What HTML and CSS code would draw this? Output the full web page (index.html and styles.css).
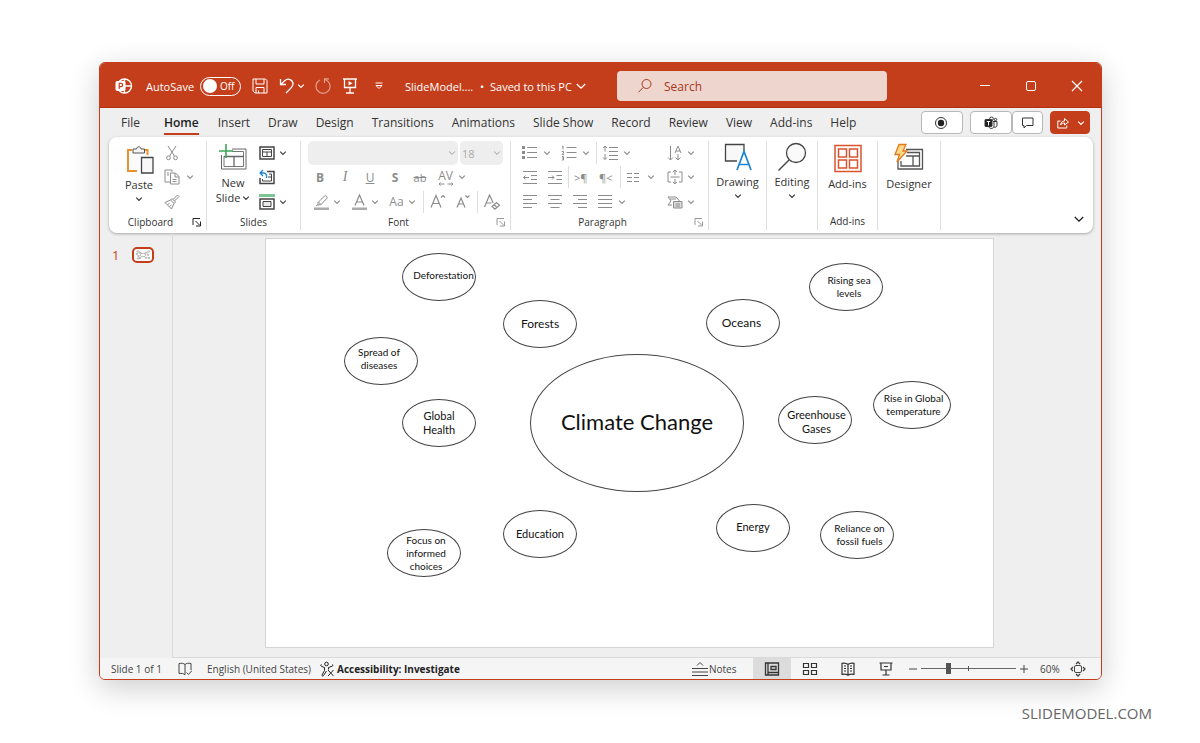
FILE: index.html
```html
<!DOCTYPE html>
<html lang="en">
<head>
<meta charset="utf-8">
<title>SlideModel - Climate Change</title>
<link rel="stylesheet" href="styles.css">
</head>
<body>
<svg class="defs" aria-hidden="true">
  <symbol id="chev" viewBox="0 0 8 8"><path d="M1.2 2.6 4 5.4 6.800 2.600"/></symbol>
  <symbol id="launch" viewBox="0 0 10 10"><path d="M1 8V1.500H8M3.500 4 8 8.500M8.500 4.500V9H4"/></symbol>
</svg>

<main class="window">
  <header class="titlebar">
    <svg class="logo" viewBox="0 0 18 18" aria-hidden="true">
      <circle cx="9.500" cy="9" r="7" fill="none" stroke="#fff" stroke-width="1.400"/>
      <path d="M9.500 2v14M9.500 9h7" stroke="#fff" stroke-width="1.300"/>
      <rect x="1" y="4.500" width="9" height="9" rx="1" fill="#fff"/>
      <path d="M4.200 12V6.300h1.800a1.600 1.600 0 0 1 0 3.300H4.200" fill="none" stroke="#c43e1c" stroke-width="1.200"/>
    </svg>
    <label class="autosave"><span class="autosave-text">AutoSave</span>
      <span class="toggle"><input type="checkbox" role="switch" class="toggle-input"><span class="toggle-state">Off</span></span>
    </label>
    <div class="quick">
      <button class="tbtn save" aria-label="Save"><svg class="i16" viewBox="0 0 16 16"><path d="M1 1h12.500l1.500 1.500V15H3L1 13zM4 1v5h8V1M4 15v-5.500h8V15M6.500 15v-2.500"/></svg></button>
      <button class="tbtn undo" aria-label="Undo"><svg class="i16" viewBox="0 0 16 16"><path d="M1.500 1v5.500H7M1.500 6.500 6 2.500C9-.2 14 1.500 14 6c0 2-1.200 3.200-2.500 4.500L7 15" stroke-width="1.300"/></svg><svg class="chev"><use href="#chev"/></svg></button>
      <button class="tbtn redo" aria-label="Redo"><svg class="i16" viewBox="0 0 16 16"><path d="M9.500 5V.8H14M5 2A7 7 0 1 0 11.500 2.200L9.500.8" stroke-width="1.200"/></svg></button>
      <button class="tbtn show" aria-label="Start slide show"><svg class="i16" viewBox="0 0 16 16"><path d="M1 1h14M2.500 1v8.500h11V1M8 9.500V15M4 15h8" stroke-width="1.300"/><path d="m6.500 3 4 2.300-4 2.300z" fill="#fff" stroke="none"/></svg></button>
      <button class="tbtn more" aria-label="Customize toolbar"><svg class="i10" viewBox="0 0 10 10"><path d="M1.500 2h7M2 4.500h6L5 7.500z"/></svg></button>
    </div>
    <button class="docname"><span class="doc-file">SlideModel....</span><span class="doc-dot">•</span><span>Saved to this PC</span><svg class="i10 doc-chev" viewBox="0 0 10 10"><path d="M.8 3 5 7.200 9.200 3" stroke-width="1.300"/></svg></button>
    <label class="search">
      <svg class="i16" viewBox="0 0 16 16"><circle cx="9.500" cy="6" r="4.500"/><path d="M6.300 9.300 1.500 14.300"/></svg>
      <input type="text" placeholder="Search" aria-label="Search">
    </label>
    <div class="controls">
      <button aria-label="Minimize"><svg class="i12" viewBox="0 0 12 12"><path d="M1 5.500h10"/></svg></button>
      <button aria-label="Maximize"><svg class="i12" viewBox="0 0 12 12"><rect x="1.500" y="1.500" width="9" height="9" rx="1.500"/></svg></button>
      <button aria-label="Close"><svg class="i12" viewBox="0 0 12 12"><path d="m1 1 10 10M11 1 1 11" stroke-width="1.200"/></svg></button>
    </div>
  </header>

  <div class="tabrow">
    <nav class="tabs">
      <a href="#file" class="tab tab-file">File</a><a href="#home" class="tab active" aria-current="page">Home</a><a href="#insert" class="tab">Insert</a><a href="#draw" class="tab">Draw</a><a href="#design" class="tab">Design</a><a href="#transitions" class="tab">Transitions</a><a href="#animations" class="tab">Animations</a><a href="#slideshow" class="tab">Slide Show</a><a href="#record" class="tab">Record</a><a href="#review" class="tab">Review</a><a href="#view" class="tab">View</a><a href="#addins" class="tab">Add-ins</a><a href="#help" class="tab">Help</a>
    </nav>
    <div class="actions">
      <button class="act rec" aria-label="Record"><svg class="i14" viewBox="0 0 14 14"><circle cx="6" cy="7" r="5.500"/><circle cx="6" cy="7" r="3.200" fill="#222" stroke="none"/></svg></button>
      <button class="act teams" aria-label="Teams"><svg class="i14" viewBox="0 0 14 14"><circle cx="7.500" cy="2.800" r="1.800"/><circle cx="11.500" cy="3.500" r="1.200"/><path d="M9 5.500h4v4a2 2 0 0 1-3 1.500M5 11c.5 2 5 2.300 5-1.500v-4"/><rect x="1" y="3.500" width="7" height="7" rx=".6" fill="#222"/><path d="M2.800 5.500h3.400M4.500 5.500v4" stroke="#fff"/></svg></button>
      <button class="act comments" aria-label="Comments"><svg class="i14" viewBox="0 0 14 14"><path d="M1.500 2h10.500v7.500H5.500L3 12V9.500H1.500z"/></svg></button>
      <button class="act share" aria-label="Share"><svg class="i14" viewBox="0 0 14 14"><path d="M4.500 5H1.800v7h9V9.500M4.500 9C5 6 6.500 5 8.500 5V2.500L12.500 6 8.500 9V7C6.500 7 5.500 7.500 4.500 9z"/></svg><svg class="chev"><use href="#chev"/></svg></button>
    </div>
  </div>

  <section class="ribbon" aria-label="Home ribbon">
    <div class="group clipboard">
      <div class="group-body">
        <button class="big paste"><svg class="i30" viewBox="0 0 30 30"><path d="M8 5H4v21h9M20 5h3.500v5" stroke="#e8912d" stroke-width="2"/><path d="M5.500 7v17H15V12h7V7z" fill="#fafafa" stroke="none"/><path d="M9 8V4h3.500C13 1 16.500 1 17 4h3.500v4z" fill="#f6f6f6" stroke="#555"/><path d="M17.500 12.500h11.500v15.500H17.500z" fill="#f8f8f8" stroke="#444" stroke-width="1.300"/></svg><span>Paste</span><svg class="chev"><use href="#chev"/></svg></button>
        <div class="stack">
          <button class="sb off" aria-label="Cut"><svg class="i16" viewBox="0 0 16 16"><path d="M4 1 10.500 11M12 1 5.500 11"/><circle cx="4.500" cy="12.800" r="1.900"/><circle cx="11.500" cy="12.800" r="1.900"/></svg></button>
          <button class="sb off" aria-label="Copy"><svg class="i16" viewBox="0 0 16 16"><path d="M6 13H1V1h7v2M6.500 4h5l3.500 3.500V15H6.500zM11 4v4h4M8.500 10.500h4M8.500 12.500h4M3 4h2M3 6h2"/></svg><svg class="chev"><use href="#chev"/></svg></button>
          <button class="sb off" aria-label="Format painter"><svg class="i16" viewBox="0 0 16 16"><path d="M9 5.500 13.500 1 15 2.500 10.500 7M8 4.500l3.500 3.500-1.500 1.500L6.500 6zM6.500 6 1 8.500 7.500 15 10 9.500M3.500 10.500l2-1M5.500 12.500l2-1.500"/></svg></button>
        </div>
      </div>
      <div class="group-name with-launch"><span>Clipboard</span><button class="launch dark" aria-label="Clipboard options"><svg><use href="#launch"/></svg></button></div>
    </div>

    <div class="group slides">
      <div class="group-body">
        <button class="big newslide"><svg class="i30" viewBox="0 0 30 30"><path d="M3.500 12v14h24.500v-20H14" stroke="#666" stroke-width="1"/><path d="M6 13v10.500h19.500v-15H14" stroke="#777" stroke-width="1"/><path d="M6 13.500h19.500M16 13.500V24" stroke="#666" stroke-width="1.300"/><path d="M8 1v14M1 8h14" stroke="#39a95a" stroke-width="1.600"/></svg><span>New<br>Slide <svg class="chev"><use href="#chev"/></svg></span></button>
        <div class="stack">
          <button class="sb" aria-label="Layout"><svg class="i16" viewBox="0 0 16 16"><path d="M1 2h14v12H1z" stroke-width="1.500"/><path d="M3.500 4.500h9v7h-9zM3.500 7h9M8 7v4.500"/></svg><svg class="chev"><use href="#chev"/></svg></button>
          <button class="sb" aria-label="Reset slide"><svg class="i16" viewBox="0 0 16 16"><path d="M8 2.500h7v12H1V9" stroke-width="1.500"/><path d="M10 5h2.500v7h-9v-2M9 8h3"/><path d="M4 1 1 4l3 3M1 4h3.500C7 4 8 6 7.500 9" stroke="#1a84d6" stroke-width="1.300"/></svg></button>
          <button class="sb" aria-label="Section"><svg class="i16" viewBox="0 0 16 16"><path d="M0 0h16v3H0z" fill="#7cc595" stroke="none"/><path d="M1 5h14v10H1z" stroke-width="1.500"/><path d="M4 7.500h8v5H4z" fill="#e8e8e8"/></svg><svg class="chev"><use href="#chev"/></svg></button>
        </div>
      </div>
      <div class="group-name"><span>Slides</span></div>
    </div>

    <div class="group font">
      <div class="rows off">
        <div class="row">
          <select class="pick family" aria-label="Font family"><option></option></select>
          <select class="pick size" aria-label="Font size"><option>18</option></select>
        </div>
        <div class="row">
          <button class="fb"><b>B</b></button>
          <button class="fb serif"><i>I</i></button>
          <button class="fb"><u>U</u></button>
          <button class="fb"><b>S</b></button>
          <button class="fb small"><s>ab</s></button>
          <button class="fb wide" aria-label="Character spacing"><span class="spacing">AV<svg viewBox="0 0 16 4"><path d="M1 2h5.500M9.500 2H15M2.500.5 1 2l1.500 1.500M13.500.5 15 2l-1.500 1.500"/></svg></span><svg class="chev"><use href="#chev"/></svg></button>
        </div>
        <div class="row">
          <button class="fb wide" aria-label="Highlight color"><svg class="i16" viewBox="0 0 16 16"><path d="M1 13.500h15V16H1z" fill="#aaa" stroke="none"/><path d="M5 8.500 11.500 2c1-1 3.500 1 2.500 2.300L8 10.500 5 11zM5.500 8 8 10.500M5 10.500 3 12"/></svg><svg class="chev"><use href="#chev"/></svg></button>
          <button class="fb wide" aria-label="Font color"><svg class="i16" viewBox="0 0 16 16"><path d="M1 13.500h15V16H1z" fill="#aaa" stroke="none"/><path d="M4 11.500 8.500 1 13 11.500M5.500 8h6" stroke-width="1.200"/></svg><svg class="chev"><use href="#chev"/></svg></button>
          <button class="fb wide" aria-label="Change case"><span>Aa</span><svg class="chev"><use href="#chev"/></svg></button>
          <span class="bar"></span>
          <button class="fb" aria-label="Increase font size"><svg class="i18" viewBox="0 0 18 18"><path d="M2 14.500 7 2.500l5 12M3.800 10.500h6.500M12 4.500l2-2 2 2" stroke-width="1.200"/></svg></button>
          <button class="fb" aria-label="Decrease font size"><svg class="i18" viewBox="0 0 18 18"><path d="m3 14.500 4-9.500 4 9.500M4.500 11h5M11.500 2.500l2 2 2-2" stroke-width="1.200"/></svg></button>
          <span class="bar"></span>
          <button class="fb" aria-label="Clear formatting"><svg class="i18" viewBox="0 0 18 18"><path d="M1.500 14 6.500 2l3.700 8M3.500 10h5M9 13.500l4.500-4 3 2.800-4.500 4zM11 11.800l3 2.700" stroke-width="1.200"/></svg></button>
        </div>
      </div>
      <div class="group-name with-launch"><span>Font</span><button class="launch" aria-label="Font options"><svg><use href="#launch"/></svg></button></div>
    </div>

    <div class="group paragraph">
      <div class="rows off">
        <div class="row">
          <button class="pb wide" aria-label="Bullets"><svg class="i16" viewBox="0 0 16 16"><path d="M5 2.500h10M5 7.500h10M5 12.500h10"/><path d="M0 2.500h3M0 7.500h3M0 12.500h3" stroke-width="3"/></svg><svg class="chev"><use href="#chev"/></svg></button>
          <button class="pb wide" aria-label="Numbering"><svg class="i16" viewBox="0 0 16 16"><path d="M5.500 2.500h10M5.500 7.500h10M5.500 12.500h10M1 1.500l1-.5v3.500M.8 6.500h1.700v1.500L1 9.500h2M.8 11.500h1.700v3.500H.8M1 13h1.500" /></svg><svg class="chev"><use href="#chev"/></svg></button>
          <span class="bar"></span>
          <button class="pb wide" aria-label="Line spacing"><svg class="i16" viewBox="0 0 16 16"><path d="M7 2.500h9M7 6.500h9M7 10.500h9M7 14.500h9M3 1v5.500M3 9v5.500M1 3l2-2 2 2M1 12.500l2 2 2-2"/></svg><svg class="chev"><use href="#chev"/></svg></button>
          <button class="pb last" aria-label="Text direction"><svg class="i16" viewBox="0 0 16 16"><path d="M3.500 1v14M1 12.500 3.500 15 6 12.500M11 9v6M8.500 12.500 11 15l2.500-2.500M8 8l3-7 3 7M9 6h4"/></svg><svg class="chev"><use href="#chev"/></svg></button>
        </div>
        <div class="row">
          <button class="pb" aria-label="Decrease indent"><svg class="i16" viewBox="0 0 16 16"><path d="M1 2.500h14M9 6.500h6M9 10.500h6M1 14.500h14M1.500 8.500H7M3.500 6.500l-2 2 2 2"/></svg></button>
          <button class="pb" aria-label="Increase indent"><svg class="i16" viewBox="0 0 16 16"><path d="M1 2.500h14M9.500 6.500H15M9.500 10.500H15M1 14.500h14M1 8.500h6M5 6.500l2 2-2 2"/></svg></button>
          <span class="bar"></span>
          <button class="pb pil" aria-label="Left to right">&gt;¶</button>
          <button class="pb pil" aria-label="Right to left">¶&lt;</button>
          <span class="bar"></span>
          <button class="pb wide" aria-label="Columns"><svg class="i16" viewBox="0 0 16 16"><path d="M1 4.500h5M1 8.500h5M1 12.500h5M8 4.500h5M8 8.500h5M8 12.500h5"/></svg><svg class="chev"><use href="#chev"/></svg></button>
          <button class="pb last" aria-label="Align text"><svg class="i16" viewBox="0 0 16 16"><path d="M4 3H1v10h3M12 3h3v10h-3M3.500 8h9M8 1v5M8 10v5M6 3l2-2 2 2M6 13l2 2 2-2"/></svg><svg class="chev"><use href="#chev"/></svg></button>
        </div>
        <div class="row">
          <button class="pb" aria-label="Align left"><svg class="i16" viewBox="0 0 16 16"><path d="M1 1.500h14M1 5.500h9M1 9.500h14M1 13.500h9"/></svg></button>
          <button class="pb" aria-label="Center"><svg class="i16" viewBox="0 0 16 16"><path d="M1 1.500h14M3.500 5.500h9M1 9.500h14M3.500 13.500h9"/></svg></button>
          <button class="pb" aria-label="Align right"><svg class="i16" viewBox="0 0 16 16"><path d="M1 1.500h14M6 5.500h9M1 9.500h14M6 13.500h9"/></svg></button>
          <button class="pb wide" aria-label="Justify"><svg class="i16" viewBox="0 0 16 16"><path d="M1 1.500h14M1 5.500h14M1 9.500h14M1 13.500h14"/></svg><svg class="chev"><use href="#chev"/></svg></button>
          <button class="pb last" aria-label="Convert to SmartArt"><svg class="i16" viewBox="0 0 16 16"><path d="M1 3h8l3.500 4M1 3l3 4-3 4h4M3 5h6"/><path d="M6.500 7.500h8.500V14H6.500z" fill="#ddd"/><path d="M8.500 10h4.500M8.500 12h4.500"/></svg><svg class="chev"><use href="#chev"/></svg></button>
        </div>
      </div>
      <div class="group-name with-launch"><span>Paragraph</span><button class="launch" aria-label="Paragraph options"><svg><use href="#launch"/></svg></button></div>
    </div>

    <div class="group drawing"><button class="big"><svg class="i30" viewBox="0 0 30 30"><path d="M14 19H2.500V2.500H21V9" fill="#f8f8f8" stroke="#444" stroke-width="1.300"/><path d="M14 28 21 9.500 28 28M16.500 22.500h9" stroke="#1a84d6" stroke-width="1.700"/></svg><span>Drawing</span><svg class="chev"><use href="#chev"/></svg></button></div>
    <div class="group editing"><button class="big"><svg class="i30" viewBox="0 0 30 30"><circle cx="19" cy="11" r="9.500" fill="#fafafa" stroke="#444" stroke-width="1.300"/><path d="M12 18 1.500 28.500" stroke="#444" stroke-width="1.500"/></svg><span>Editing</span><svg class="chev"><use href="#chev"/></svg></button></div>
    <div class="group addins"><div class="group-body"><button class="big lower"><svg class="i30" viewBox="0 0 30 30"><path d="M2 2.500h26v26H2zM5.500 6h8v8h-8zM16.500 6h8v8h-8zM5.500 17h8v8h-8zM16.500 17h8v8h-8z" stroke="#d9532c" stroke-width="1.500"/></svg><span>Add-ins</span></button></div><div class="group-name"><span>Add-ins</span></div></div>
    <div class="group designer"><button class="big lower"><svg class="i30" viewBox="0 0 30 30"><path d="M12 6.500h16.500v19.500H4v-8" stroke="#555" stroke-width="1.300"/><path d="M13 9.500h12.500v13.500H7v-5M12 13h13.500M19 13v10" stroke="#555" stroke-width="1.300"/><path d="M5 1.500h7L9 8h4L3 19l2.500-7.500H1z" fill="#ffd98a" stroke="#e07a1f" stroke-width="1.300"/></svg><span>Designer</span></button></div>
    <button class="collapse" aria-label="Collapse ribbon"><svg class="i10" viewBox="0 0 10 10"><path d="M.8 3 5 7.200 9.200 3" stroke-width="1.300"/></svg></button>
  </section>

  <div class="workspace">
    <aside class="thumbs" aria-label="Slides">
      <span class="thumb-no">1</span>
      <button class="thumb" aria-label="Slide 1"><svg viewBox="0 0 18 10"><g fill="none" stroke="#999" stroke-width=".7"><ellipse cx="9" cy="5" rx="2.600" ry="1.800"/><ellipse cx="4" cy="1.500" rx="1.200" ry=".7"/><ellipse cx="6" cy="2.800" rx="1" ry=".6"/><ellipse cx="3" cy="4" rx="1" ry=".6"/><ellipse cx="4.500" cy="6" rx="1" ry=".6"/><ellipse cx="6" cy="8" rx="1" ry=".6"/><ellipse cx="4" cy="8.500" rx="1" ry=".6"/><ellipse cx="12" cy="2.800" rx="1" ry=".6"/><ellipse cx="14.500" cy="1.600" rx="1" ry=".6"/><ellipse cx="14" cy="4.800" rx="1" ry=".6"/><ellipse cx="12" cy="7.800" rx="1" ry=".6"/><ellipse cx="15" cy="8" rx="1" ry=".6"/></g></svg></button>
    </aside>
    <div class="stage">
      <div class="slide">
        <div class="node deforestation"><p>Deforestation</p></div>
        <div class="node mid forests"><p>Forests</p></div>
        <div class="node spread"><p>Spread of<br>diseases</p></div>
        <div class="node mid small-mid health"><p>Global<br>Health</p></div>
        <div class="node main"><p>Climate Change</p></div>
        <div class="node mid oceans"><p>Oceans</p></div>
        <div class="node rising"><p>Rising sea<br>levels</p></div>
        <div class="node global"><p>Rise in Global<br>temperature</p></div>
        <div class="node mid small-mid gases"><p>Greenhouse<br>Gases</p></div>
        <div class="node mid small-mid energy"><p>Energy</p></div>
        <div class="node reliance"><p>Reliance on<br>fossil fuels</p></div>
        <div class="node mid small-mid education"><p>Education</p></div>
        <div class="node focus"><p>Focus on<br>informed<br>choices</p></div>
      </div>
    </div>
  </div>

  <footer class="status">
    <span class="count">Slide 1 of 1</span>
    <button class="spell" aria-label="Spelling"><svg class="i14" viewBox="0 0 14 14"><path d="M7 2.500C5.500 1.200 3.500 1 1 1.500v10c2.500-.4 4.500 0 6 1.300M7 2.500C8.500 1.200 10.500 1 13 1.500V8M7 2.500v10M8.500 10.500l2 2L14 8.500"/></svg></button>
    <span class="lang">English (United States)</span>
    <button class="access"><svg class="i16" viewBox="0 0 16 16"><circle cx="6.500" cy="3" r="1.800"/><path d="M1.500 3.500c-1.200.3-1 1.500 0 1.800L4.500 6.500v3L2 14c-.3 1.200 1 1.500 1.500.6L6.500 10M12 3.500c1.200.3 1 1.500 0 1.800L8.500 6.500v2M8 9l5.500 6M13.500 9 8 15"/></svg><span>Accessibility: Investigate</span></button>
    <div class="right">
      <button class="notes"><svg class="i16" viewBox="0 0 16 16"><path d="M0 7.500h16M0 11h16M0 14.500h16M5 4.500l3-3 3 3"/></svg><span>Notes</span></button>
      <button class="view on" aria-label="Normal view"><svg class="i16" viewBox="0 0 16 16"><path d="M1.500 2h13v12h-13zM4 2v12M4 11.500h10.500" stroke-width="1.300"/><path d="M7 5.500h5v3H7z" stroke-width="1.300"/></svg></button>
      <button class="view" aria-label="Slide sorter"><svg class="i16" viewBox="0 0 16 16"><path d="M1.500 2.500h5v4h-5zM9.500 2.500h5v4h-5zM1.500 9.500h5v4h-5zM9.500 9.500h5v4h-5z" stroke-width="1.200"/></svg></button>
      <button class="view" aria-label="Reading view"><svg class="i16" viewBox="0 0 16 16"><path d="M8 3.500C6.500 2 4 2 2 2.300v11c2-.3 4.500-.3 6 1 1.500-1.300 4-1.300 6-1v-11c-2-.3-4.500-.3-6 1.200zM8 3.500V14M4 5h2M4 7.500h2M4 10h2M10 5h2M10 7.500h2M10 10h2" stroke-width="1.200"/></svg></button>
      <button class="view" aria-label="Slide show"><svg class="i16" viewBox="0 0 16 16"><path d="M1.500 2h13M3 2v7h10V2M8 9v5M4.500 14h7M6 5.500h4" stroke-width="1.200"/></svg></button>
      <button class="zoom-step" aria-label="Zoom out"><svg class="i10" viewBox="0 0 10 10"><path d="M1 5h8"/></svg></button>
      <input class="zoom" type="range" min="0" max="100" value="28" aria-label="Zoom">
      <button class="zoom-step" aria-label="Zoom in"><svg class="i10" viewBox="0 0 10 10"><path d="M1 5h8M5 1v8"/></svg></button>
      <span class="pct">60%</span>
      <button class="fit" aria-label="Fit slide"><svg class="i16" viewBox="0 0 16 16"><rect x="4.500" y="4.500" width="7" height="7" rx="1.500"/><path d="m6 3 2-2 2 2M6 13l2 2 2-2M3 6 1 8l2 2M13 6l2 2-2 2" stroke-width="1.300"/></svg></button>
    </div>
  </footer>
</main>
<p class="credit">SLIDEMODEL.COM</p>
</body>
</html>
```
FILE: styles.css
```css
* { box-sizing: border-box; }
body {
  margin: 0;
  min-height: 100vh;
  display: flex;
  flex-direction: column;
  padding: 62px 98px 0 99px;
  background: #fff;
  font-family: "Open Sans", "Noto Sans", sans-serif;
  font-size: 11px;
  color: #333;
}
p { margin: 0; }
.defs { display: none; }
button {
  display: inline-flex;
  align-items: center;
  padding: 0;
  border: 0;
  background: none;
  font: inherit;
  color: inherit;
  white-space: nowrap;
}
svg { fill: none; stroke: currentColor; stroke-width: 1; flex: none; }
.chev { width: 8px; height: 8px; stroke-width: 1.2; }
.i10 { width: 10px; height: 10px; }
.i12 { width: 12px; height: 12px; }
.i14 { width: 14px; height: 14px; }
.i16 { width: 16px; height: 16px; }
.i18 { width: 18px; height: 18px; }
.i30 { width: 30px; height: 30px; }

.window {
  flex: 1;
  display: flex;
  flex-direction: column;
  overflow: hidden;
  border: 1px solid #c43e1c;
  border-radius: 6px;
  background: #efefef;
  box-shadow: 0 8px 30px rgba(0, 0, 0, .2);
}

/* Title bar */
.titlebar {
  display: flex;
  align-items: center;
  height: 45px;
  padding: 2px 1px 0 15px;
  border-bottom: 1px solid #b3300f;
  background: #c43e1c;
  color: #fff;
}
.logo { width: 18px; height: 18px; }
.autosave { display: flex; align-items: center; margin-left: 13px; }
.autosave-text { width: 54px; }
.toggle {
  display: flex;
  align-items: center;
  width: 41px;
  height: 19px;
  padding: 0 2px;
  border: 1px solid #fff;
  border-radius: 10px;
  font-size: 10px;
}
.toggle-input {
  appearance: none;
  width: 14px;
  height: 14px;
  margin: 0 3px 0 0;
  border-radius: 50%;
  background: #fff;
}
.quick { display: flex; align-items: center; gap: 10px; margin-left: 11px; width: 153px; }
.undo { gap: 2px; width: 26px; margin-left: 1px; }
.redo { opacity: .5; }
.more { margin-left: 6px; }
.show { margin-left: 1px; }
.docname { width: 212px; }
.doc-file { width: 75px; text-align: left; }
.doc-dot { width: 10px; text-align: left; }
.doc-chev { margin-left: 4px; }
.search {
  display: flex;
  align-items: center;
  flex: 0 1 270px;
  gap: 11px;
  height: 30px;
  padding: 0 20px;
  border-radius: 4px;
  background: #eed6cf;
  color: #a8371b;
}
.search input {
  flex: 1;
  min-width: 0;
  padding: 0;
  border: 0;
  background: none;
  font: 12px "Open Sans", sans-serif;
  color: inherit;
}
.search input::placeholder { color: #a8371b; opacity: 1; }
.controls { display: flex; margin-left: auto; }
.controls button { width: 46px; height: 30px; justify-content: center; }

/* Tabs */
.tabrow { display: flex; align-items: center; height: 29px; padding: 0 11px 0 21px; }
.tabs { display: flex; gap: 18px; padding-top: 3px; }
.tab { color: #333; font-size: 12px; line-height: 20px; text-decoration: none; white-space: nowrap; }
.tab-file { margin-right: 6px; }
.active { margin-right: 1px; border-bottom: 2px solid #c43e1c; font-weight: 600; color: #222; }
.actions { display: flex; margin-left: auto; }
.act {
  justify-content: center;
  height: 23px;
  border: 1px solid #b8b8b8;
  border-radius: 4px;
  background: #fff;
  color: #333;
}
.rec { width: 42px; margin-right: 7px; }
.teams { width: 42px; }
.comments { width: 31px; margin-right: 7px; }
.share { width: 40px; gap: 7px; border-color: #c43e1c; background: #c43e1c; color: #fff; }

/* Ribbon */
.ribbon {
  display: flex;
  height: 96px;
  margin: 0 8px 0 9px;
  padding: 4px 0 3px;
  border-radius: 8px;
  background: #fff;
  box-shadow: 0 1px 3px rgba(0, 0, 0, .3);
}
.group { display: flex; flex-direction: column; border-right: 1px solid #dedede; color: #333; }
.group-body { display: flex; flex: 1; }
.group-name { display: grid; align-items: center; height: 18px; font-size: 10px; color: #333; text-align: center; }
.with-launch { grid-template-columns: 1fr 14px; }
.launch { width: 10px; height: 10px; color: #999; }
.launch.dark { color: #222; }
.launch svg { width: 10px; height: 10px; }
.big { flex-direction: column; justify-content: flex-start; font-size: 11px; line-height: 15px; }
.big .i30 { margin-bottom: 2px; }
.big > .chev { margin-top: 3px; }
.stack { display: grid; grid-template-rows: 24px 24px 25px; align-items: center; align-content: start; }
.sb { gap: 4px; color: #444; }
.off, .off button { color: #8c8c8c; }
.clipboard { width: 98px; }
.paste { width: 36px; margin: 4px 0 0 12px; }
.clipboard .stack { margin-left: 7px; }
.clipboard .sb { gap: 6px; }
.slides { width: 94px; }
.newslide { width: 42px; margin: 2px 0 0 5px; }
.slides .stack { margin-left: 5px; }
.newslide .chev { margin-left: -1px; }
.rows { display: grid; grid-template-rows: 24px 24px 25px 1fr; flex: 1; padding: 0 7px; }
.row { display: flex; align-items: center; }
.font { width: 210px; }
.pick {
  height: 24px;
  padding: 0 2px;
  appearance: none;
  border: 0;
  border-radius: 5px;
  background: #eee url("data:image/svg+xml,%3Csvg xmlns='http://www.w3.org/2000/svg' viewBox='0 0 8 8'%3E%3Cpath d='M1.200 2.600 4 5.400 6.800 2.600' fill='none' stroke='%23999'/%3E%3C/svg%3E") no-repeat right 2px center / 8px 8px;
  font: 11px "Open Sans", sans-serif;
  color: #aaa;
}
.family { width: 150px; margin-right: 2px; }
.size { width: 43px; }
.fb { justify-content: center; width: 24px; height: 24px; font-size: 12px; }
.row .fb + .fb { margin-left: 1px; }
.fb.wide { width: 37px; gap: 4px; }
.serif { font-family: "Liberation Serif", serif; font-size: 14px; }
.small { font-size: 11px; }
.spacing { display: grid; justify-items: center; font-size: 12px; line-height: 13px; }
.spacing svg { width: 16px; height: 4px; }
.bar { width: 1px; height: 22px; margin: 0 2px; background: #dedede; }
.paragraph { width: 198px; }
.paragraph .rows { padding-right: 12px; }
.paragraph .bar { margin: 0 1px; }
.pb { width: 24px; height: 24px; padding-left: 4px; }
.row .pb + .pb { margin-left: 1px; }
.pb.wide { width: 38px; gap: 5px; }
.row .pb.last { width: 33px; gap: 4px; margin-left: auto; }
.pil { font-size: 11px; }
.drawing { width: 58px; }
.editing { width: 51px; }
.addins { width: 60px; }
.designer { width: 63px; }
.group > .big { margin-top: 1px; }
.addins .big { flex: 1; margin-top: 1px; }
.lower .i30 { margin: 1px 0 3px; }
.collapse { align-self: flex-end; margin: 0 9px 6px auto; color: #222; }

/* Workspace */
.workspace { display: flex; flex: 1; }
.thumbs {
  display: flex;
  align-items: flex-start;
  gap: 12px;
  width: 73px;
  padding: 13px 0 0 12px;
  border-right: 1px solid #d9d9d9;
}
.thumb-no { width: 8px; font-size: 13px; line-height: 18px; color: #d0401c; }
.thumb { width: 22px; height: 16px; margin-top: 1px; border: 2px solid #c43e1c; border-radius: 5px; background: #fff; }
.thumb svg { width: 18px; height: 10px; }
.stage { display: flex; flex: 1; padding: 5px 107px 9px 92px; border-bottom: 1px solid #d9d9d9; }
.slide { position: relative; flex: 1; min-width: 700px; border: 1px solid #d4d4d4; background: #fff; }
.node {
  position: absolute;
  display: flex;
  align-items: center;
  justify-content: center;
  width: 74px;
  height: 48px;
  border: 1px solid #444;
  border-radius: 50%;
  font-family: Lato, Carlito, sans-serif;
  font-size: 10px;
  font-variant-ligatures: none;
  line-height: 13px;
  text-align: center;
  white-space: nowrap;
  color: #111;
}
.mid { font-size: 12px; line-height: 14px; }
.small-mid { font-size: 11px; }
.main { left: 264px; top: 115px; width: 214px; height: 138px; padding-bottom: 3px; font-size: 22px; line-height: 28px; }
.deforestation { left: 136px; top: 14px; padding: 0 0 4px 9px; }
.forests { left: 237px; top: 61px; }
.spread { left: 78px; top: 98px; padding: 0 4px 4px 0; }
.health { left: 136px; top: 160px; }
.oceans { left: 440px; top: 60px; padding-right: 3px; }
.rising { left: 543px; top: 24px; padding-left: 6px; }
.global { left: 607px; top: 142px; width: 78px; padding-left: 3px; }
.gases { left: 512px; top: 157px; padding: 4px 0 0 3px; }
.energy { left: 450px; top: 265px; padding-bottom: 2px; }
.reliance { left: 554px; top: 272px; padding-left: 5px; }
.education { left: 237px; top: 271px; }
.focus { left: 121px; top: 290px; padding-left: 4px; }

/* Status bar */
.status { display: flex; align-items: center; height: 21px; padding: 0 15px 0 11px; background: #f5f5f5; font-size: 10px; color: #444; white-space: nowrap; }
.count { width: 67px; }
.spell { width: 29px; }
.lang { width: 113px; }
.access { gap: 1px; font-weight: 700; color: #222; }
.right { display: flex; align-items: center; align-self: stretch; margin-left: auto; }
.notes { gap: 1px; width: 61px; }
.view { align-self: stretch; justify-content: center; width: 38px; color: #333; }
.on { background: #dcdcdc; }
.zoom-step { width: 10px; margin: 0 3px; }
.zoom {
  appearance: none;
  width: 95px;
  height: 12px;
  margin: 0;
  background:
    linear-gradient(#555, #555) center / 1px 5px no-repeat,
    linear-gradient(#666, #666) center / 100% 1px no-repeat;
}
.zoom::-webkit-slider-thumb { appearance: none; width: 5px; height: 11px; background: #555; }
.pct { width: 35px; padding-left: 8px; margin-right: 3px; }

.credit { height: 63px; margin-right: -50px; padding-top: 23px; font-size: 15px; line-height: 20px; text-align: right; color: #666; }
```
